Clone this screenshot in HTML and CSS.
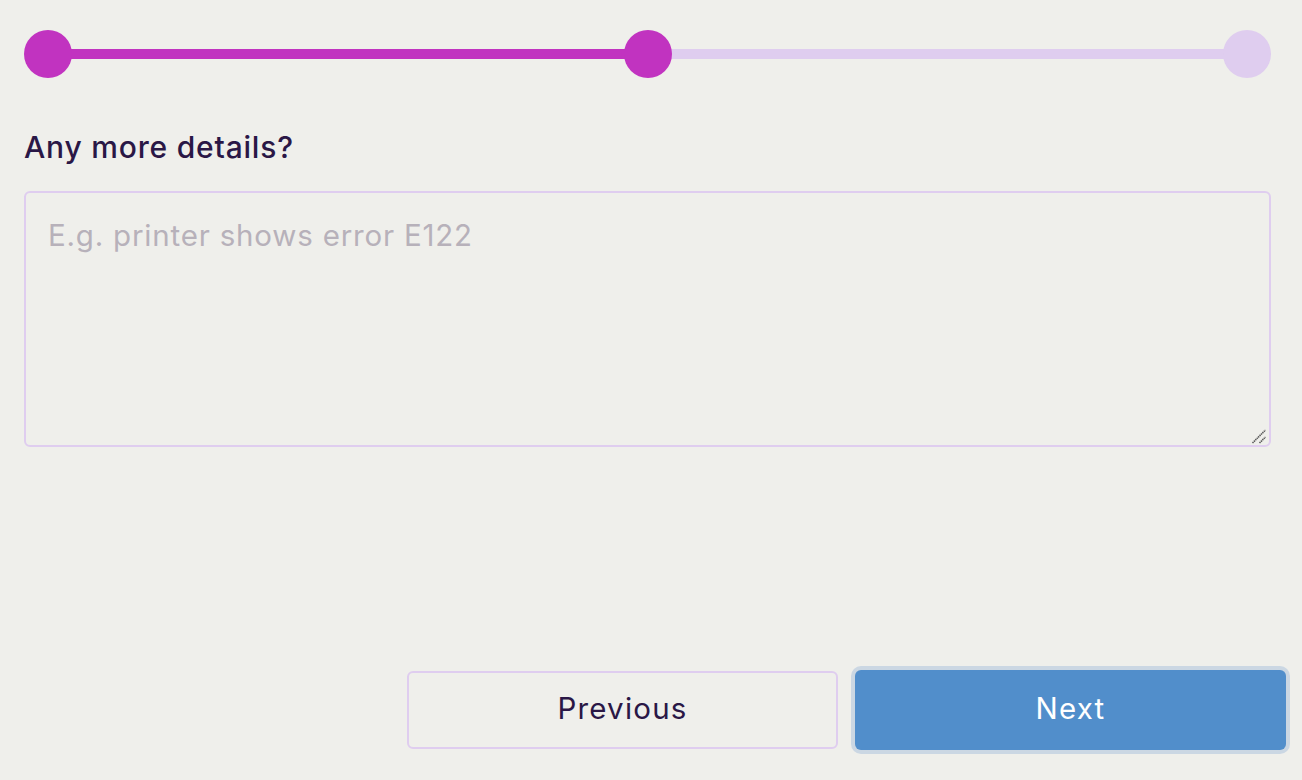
FILE: index.html
```html
<!DOCTYPE html>
<html lang="en">
<head>
<meta charset="utf-8">
<title>Any more details?</title>
<link rel="stylesheet" href="styles.css">
</head>
<body>
<div class="page">
  <div class="stepper">
    <div class="track"><div class="track-fill"></div></div>
    <span class="dot done"></span>
    <span class="dot done"></span>
    <span class="dot"></span>
  </div>
  <label class="question" for="details">Any more details?</label>
  <div class="field">
    <textarea id="details" class="details" placeholder="E.g. printer shows error E122"></textarea>
    <svg class="grip" width="16" height="16" viewBox="0 0 16 16" aria-hidden="true">
      <line x1="1.5" y1="15" x2="14.5" y2="2" stroke="#5a5a5a" stroke-width="1.6" stroke-dasharray="1.4 0.6"/>
      <line x1="8.5" y1="15" x2="14.5" y2="9" stroke="#5a5a5a" stroke-width="1.6" stroke-dasharray="1.4 0.6"/>
    </svg>
  </div>
  <div class="spacer"></div>
  <div class="actions">
    <button class="btn btn-secondary" type="button">Previous</button>
    <button class="btn btn-primary" type="button">Next</button>
  </div>
</div>
</body>
</html>
```
FILE: styles.css
```css
html, body {
  margin: 0;
  padding: 0;
  height: 100%;
  background: #efefeb;
}
body {
  font-family: Inter, "Open Sans", "Liberation Sans", sans-serif;
  color: #2a1746;
}
.page {
  box-sizing: border-box;
  height: 780px;
  padding: 30px 16px 30px 24px;
  display: flex;
  flex-direction: column;
}
.stepper {
  position: relative;
  width: 1247px;
  height: 48px;
  display: flex;
  justify-content: space-between;
  align-items: center;
}
.track {
  position: absolute;
  left: 24px;
  right: 24px;
  top: 19px;
  height: 10px;
  background: #dfcdef;
}
.track-fill {
  width: 50%;
  height: 100%;
  background: #c133c0;
}
.dot {
  position: relative;
  width: 48px;
  height: 48px;
  border-radius: 50%;
  background: #dfcdef;
}
.dot.done {
  background: #c133c0;
}
.question {
  margin-top: 49px;
  font-size: 30px;
  font-weight: 500;
  line-height: 40px;
  letter-spacing: 0.8px;
  color: #2a1746;
}
.field {
  position: relative;
  margin-top: 24px;
  width: 1247px;
  height: 256px;
}
.details {
  box-sizing: border-box;
  display: block;
  width: 100%;
  height: 100%;
  padding: 24px 22px;
  border: 2px solid #dfcdef;
  border-radius: 6px;
  background: #efefeb;
  font-family: inherit;
  font-size: 29.5px;
  font-weight: 400;
  letter-spacing: 0.8px;
  color: #2a1746;
  outline: none;
  resize: none;
}
.details::placeholder {
  color: #b7b1ba;
}
.grip {
  position: absolute;
  right: 4px;
  bottom: 3px;
  pointer-events: none;
}
.spacer {
  flex: 1;
}
.actions {
  display: flex;
  justify-content: flex-end;
  gap: 17px;
}
.btn {
  box-sizing: border-box;
  width: 431px;
  height: 80px;
  padding: 0 0 5px;
  border-radius: 6px;
  font-family: inherit;
  font-size: 29.5px;
  font-weight: 400;
  letter-spacing: 1.2px;
  cursor: pointer;
}
.btn-secondary {
  border: 2px solid #dfcdef;
  background: #efefeb;
  color: #2a1746;
  height: 78px;
  margin-top: 1px;
}
.btn-primary {
  border: none;
  background: #518ecb;
  color: #ffffff;
  box-shadow: 0 0 0 4px #cbd7e3;
}
```
